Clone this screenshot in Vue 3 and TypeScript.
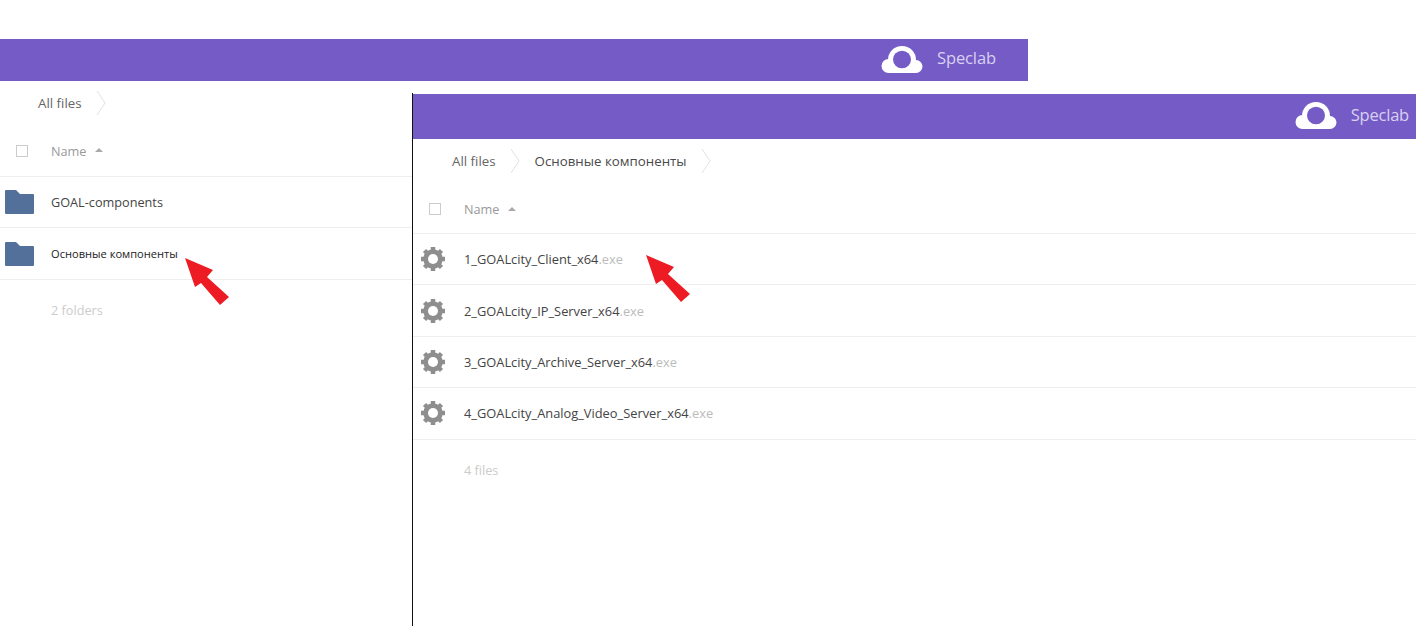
<script setup lang="ts">
interface FileRow {
  name: string
  ext?: string
  small?: boolean
}

interface FileWindow {
  id: string
  crumbs: string[]
  kind: 'folder' | 'gear'
  rows: FileRow[]
  summary: string
}

const windows: FileWindow[] = [
  {
    id: 'back',
    crumbs: ['All files'],
    kind: 'folder',
    rows: [{ name: 'GOAL-components' }, { name: 'Основные компоненты', small: true }],
    summary: '2 folders',
  },
  {
    id: 'front',
    crumbs: ['All files', 'Основные компоненты'],
    kind: 'gear',
    rows: [
      { name: '1_GOALcity_Client_x64', ext: '.exe' },
      { name: '2_GOALcity_IP_Server_x64', ext: '.exe' },
      { name: '3_GOALcity_Archive_Server_x64', ext: '.exe' },
      { name: '4_GOALcity_Analog_Video_Server_x64', ext: '.exe' },
    ],
    summary: '4 files',
  },
]

const gearTeeth = [0, 45, 90, 135]
</script>

<template>
  <div class="page">
    <section v-for="win in windows" :key="win.id" class="window" :class="win.id">
      <header class="topbar">
        <svg class="logo" viewBox="0 0 42 27" aria-hidden="true">
          <circle cx="21" cy="14" r="14" fill="#fff" />
          <circle cx="7.5" cy="20" r="7" fill="#fff" />
          <circle cx="35" cy="20.5" r="6.5" fill="#fff" />
          <rect x="7.5" y="18" width="27.5" height="9" fill="#fff" />
          <ellipse cx="21" cy="13.5" rx="9" ry="8.8" fill="#745bc6" />
        </svg>
        <span class="brand">Speclab</span>
      </header>

      <nav class="crumbs">
        <template v-for="(crumb, i) in win.crumbs" :key="crumb">
          <span class="crumb" :class="{ current: i > 0 }">{{ crumb }}</span>
          <svg class="chevron" viewBox="0 0 10 24" aria-hidden="true">
            <polyline points="1,0 9,12 1,24" fill="none" stroke="#e2e2e2" stroke-width="1" />
          </svg>
        </template>
      </nav>

      <div class="head-row">
        <span class="check"></span>
        <span class="head-name">Name</span>
        <span class="sort"></span>
      </div>

      <div v-for="row in win.rows" :key="row.name" class="row">
        <span class="icon-cell">
          <svg v-if="win.kind === 'folder'" class="folder" viewBox="0 0 29 24" aria-hidden="true">
            <path
              d="M0 1 Q0 0 1 0 H11 L15 4 H28 Q29 4 29 5 V23 Q29 24 28 24 H1 Q0 24 0 23 Z"
              fill="#527099"
            />
          </svg>
          <svg v-else class="gear" viewBox="0 0 24 24" aria-hidden="true">
            <line
              v-for="deg in gearTeeth"
              :key="deg"
              x1="12"
              y1="0"
              x2="12"
              y2="24"
              stroke="#8e8e8e"
              stroke-width="4.5"
              :transform="`rotate(${deg} 12 12)`"
            />
            <circle cx="12" cy="12" r="7" fill="none" stroke="#8e8e8e" stroke-width="5.5" />
            <circle cx="12" cy="12" r="5" fill="#fff" />
          </svg>
        </span>
        <span class="file-name" :class="{ small: row.small }">{{ row.name }}</span
        ><span v-if="row.ext" class="file-ext">{{ row.ext }}</span>
      </div>

      <p class="summary">{{ win.summary }}</p>
    </section>

    <svg class="arrow arrow-left" viewBox="0 0 44 47" aria-hidden="true">
      <polygon points="0,0 28,12 22,19 44,39 35,47 16,25 10,29" fill="#ed1c24" />
    </svg>
    <svg class="arrow arrow-right" viewBox="0 0 44 47" aria-hidden="true">
      <polygon points="0,0 28,12 22,19 44,39 35,47 16,25 10,29" fill="#ed1c24" />
    </svg>
  </div>
</template>

<style scoped>
.page {
  position: relative;
  width: 1416px;
  height: 626px;
  overflow: hidden;
  background: #fff;
  font-family: 'Open Sans', 'Liberation Sans', sans-serif;
  font-size: 12.7px;
  color: #555;
}

/* two screenshots pasted over each other, so the windows sit on a free canvas */
.window {
  position: absolute;
  background: #fff;
}

.back {
  left: -1px;
  top: 39px;
  width: 1029px;
  height: 587px;
}

.front {
  left: 412px;
  top: 93px;
  width: 1004px;
  height: 533px;
  border-left: 1px solid #111;
  box-sizing: border-box;
}

.topbar {
  display: flex;
  align-items: center;
  justify-content: flex-end;
  background: #745bc6;
  height: 42px;
  padding-right: 32px;
  box-sizing: border-box;
}

.front .topbar {
  height: 45px;
  margin-top: 1px;
  padding-right: 7px;
}

.logo {
  width: 42px;
  height: 27px;
  margin-right: 14px;
  margin-bottom: 2px;
}

.brand {
  margin-bottom: 6px;
  font-size: 16.5px;
  color: #d9d1f1;
  letter-spacing: -0.1px;
}

.front .brand {
  margin-bottom: 4px;
  letter-spacing: -0.2px;
}

.crumbs {
  display: flex;
  align-items: center;
  height: 44px;
  padding-left: 39px;
  font-size: 13.3px;
}

.crumb {
  color: #666;
}

.crumb.current {
  font-weight: 500;
  color: #4a4a4a;
}

.chevron {
  width: 10px;
  height: 24px;
  margin: 0 15px 0 14px;
}

.head-row {
  display: flex;
  align-items: center;
  height: 51px;
  padding-top: 2px;
  border-bottom: 1px solid #eee;
  box-sizing: border-box;
}

.back .head-row {
  height: 52px;
  padding-top: 0;
}

.check {
  width: 10px;
  height: 10px;
  margin-left: 17px;
  border: 1px solid #ccc;
}

.front .check {
  margin-left: 16px;
}

.head-name {
  margin-left: 23px;
  color: #999;
}

.sort {
  margin-left: 9px;
  margin-bottom: 1px;
  border-left: 4px solid transparent;
  border-right: 4px solid transparent;
  border-bottom: 4px solid #aaa;
}

.row {
  display: flex;
  align-items: center;
  height: 51.4px;
  border-bottom: 1px solid #eee;
  box-sizing: border-box;
}

.front .row {
  font-size: 12.85px;
}

.icon-cell {
  display: flex;
  align-items: center;
  width: 52px;
  flex-shrink: 0;
}

.front .icon-cell {
  width: 51px;
}

.folder {
  width: 29px;
  height: 24px;
  margin-left: 6px;
}

.gear {
  width: 24px;
  height: 24px;
  margin-left: 8px;
}

.file-name {
  color: #444;
}

.file-name.small {
  font-size: 11.1px;
  color: #222;
}

.file-ext {
  color: #bbb;
}

.summary {
  margin: 21px 0 0 52px;
  color: #ccc;
}

.front .summary {
  margin-left: 51px;
}

.arrow {
  position: absolute;
  width: 44px;
  height: 47px;
}

.arrow-left {
  left: 185px;
  top: 258px;
}

.arrow-right {
  left: 646px;
  top: 255px;
}
</style>
